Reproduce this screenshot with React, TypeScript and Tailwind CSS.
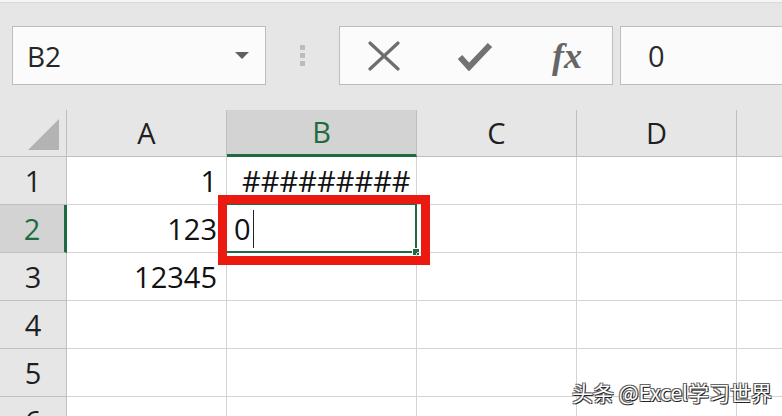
const cols = [
  { key: "A", w: "w-[160px]" },
  { key: "B", w: "w-[190px]" },
  { key: "C", w: "w-[160px]" },
  { key: "D", w: "w-[160px]" },
  { key: "E", w: "w-[160px]" },
];

const data: Record<string, string> = {
  A1: "1",
  A2: "123",
  A3: "12345",
  B1: "#########",
};

const rows = [1, 2, 3, 4, 5, 6];

const Toolbar = () => {
  return (
    <div className="h-[110px] bg-[#e6e6e6] flex flex-col">
      <div className="h-[3px] bg-[#f5f5f5] border-b border-[#d9d9d9]" />
      <div className="flex flex-row items-start pt-[23px]">
        {/* Name box */}
        <div className="ml-[12px] w-[254px] h-[59px] bg-[#fbfbfb] border border-[#bdbdbd] flex flex-row items-center pl-[14px] pr-[16px]">
          <span className="text-[28px] text-[#262626] flex-1">B2</span>
          <svg width="14" height="8" viewBox="0 0 14 8">
            <polygon points="0,0 14,0 7,7" fill="#5f5f5f" />
          </svg>
        </div>

        {/* grip dots */}
        <div className="w-[73px] h-[59px] flex flex-col items-center justify-center gap-[3px]">
          <div className="w-[5px] h-[5px] bg-[#bcbcbc]" />
          <div className="w-[5px] h-[5px] bg-[#bcbcbc]" />
          <div className="w-[5px] h-[5px] bg-[#bcbcbc]" />
        </div>

        {/* cancel / enter / fx */}
        <div className="w-[274px] h-[59px] bg-[#fbfbfb] border border-[#bdbdbd] flex flex-row items-center">
          <div className="w-[88px] flex justify-center">
            <svg width="34" height="30" viewBox="0 0 34 30">
              <path d="M3 2 L31 28 M31 2 L3 28" stroke="#6e6e6e" strokeWidth="3.2" strokeLinecap="round" />
            </svg>
          </div>
          <div className="w-[94px] flex justify-center">
            <svg width="36" height="30" viewBox="0 0 36 30">
              <path d="M3 16 L12 26 L33 4" stroke="#727272" strokeWidth="6" fill="none" strokeLinejoin="miter" />
            </svg>
          </div>
          <div className="w-[90px] flex justify-center">
            <span className="text-[36px] italic font-semibold text-[#666] font-['Liberation_Serif',serif] leading-none">
              fx
            </span>
          </div>
        </div>

        {/* formula input */}
        <div className="ml-[7px] flex-1 h-[59px] bg-[#fbfbfb] border border-[#bdbdbd] border-r-0 flex items-center pl-[27px]">
          <span className="text-[29px] text-[#2b2b2b]">0</span>
        </div>
      </div>
    </div>
  );
};

const Sheet = () => {
  return (
    <div className="flex flex-col bg-white">
      {/* Column headers */}
      <div className="flex flex-row h-[47px]">
        <div className="w-[67px] shrink-0 bg-[#e6e6e6] border-r border-b border-[#bfbfbf] flex items-end justify-end pr-[7px] pb-[6px]">
          <svg width="31" height="31" viewBox="0 0 31 31">
            <polygon points="31,0 31,31 0,31" fill="#b3b3b3" />
          </svg>
        </div>
        {cols.map((c) => (
          <div
            key={c.key}
            className={
              c.key === "B"
                ? `${c.w} shrink-0 bg-[#d3d3d3] border-r border-[#bfbfbf] border-b-[3px] border-b-[#1e6b41] flex items-center justify-center text-[29px] text-[#1e6b41]`
                : `${c.w} shrink-0 bg-[#e6e6e6] border-r border-b border-[#bfbfbf] flex items-center justify-center text-[29px] text-[#1f1f1f]`
            }
          >
            {c.key === "E" ? "" : c.key}
          </div>
        ))}
      </div>

      {rows.map((r) => (
        <div key={r} className="flex flex-row h-[48px]">
          <div
            className={
              r === 2
                ? "w-[67px] shrink-0 bg-[#d3d3d3] border-b border-[#bfbfbf] border-r-[3px] border-r-[#1e6b41] flex items-center justify-center text-[29px] text-[#1e6b41]"
                : "w-[67px] shrink-0 bg-[#e6e6e6] border-b border-r border-[#bfbfbf] flex items-center justify-center text-[29px] text-[#1f1f1f]"
            }
          >
            {r}
          </div>
          {cols.map((c) => {
            const id = `${c.key}${r}`;
            const val = data[id];
            const isActive = id === "B2";
            return (
              <div
                key={id}
                className={`${c.w} shrink-0 relative border-r border-b border-[#d4d4d4] flex items-center text-[29px] text-[#111] ${
                  c.key === "A" ? "justify-end pr-[9px]" : "justify-start pl-[15px]"
                }`}
              >
                {val}
                {isActive && (
                  <>
                    <div className="absolute -left-[2px] -top-[2px] w-[192px] h-[50px] border-[2px] border-[#1e6b41]" />
                    <div className="absolute left-[7px] top-0 h-full flex items-center">
                      <span>0</span>
                      <span className="w-px h-[38px] bg-[#222] ml-[2px]" />
                    </div>
                    <div className="absolute -right-[4px] -bottom-[4px] w-[8px] h-[8px] bg-[#1e6b41] border border-white" />
                  </>
                )}
              </div>
            );
          })}
        </div>
      ))}
    </div>
  );
};

export default function App() {
  return (
    <div className="relative w-[782px] h-[416px] overflow-hidden bg-white font-['Open_Sans','Noto_Sans',sans-serif]">
      <Toolbar />
      <Sheet />

      {/* red annotation box */}
      <div className="absolute left-[218px] top-[195px] w-[212px] h-[70px] border-[9px] border-[#ea1a10]" />

      {/* watermark */}
      <div className="absolute left-[572px] top-[377px] text-[21px] text-white font-['Noto_Sans_CJK_SC',sans-serif] [text-shadow:1px_1px_0_#222,-1px_-1px_0_#666,1px_-1px_0_#666,-1px_1px_0_#666]">
        头条 @Excel学习世界
      </div>
    </div>
  );
}
